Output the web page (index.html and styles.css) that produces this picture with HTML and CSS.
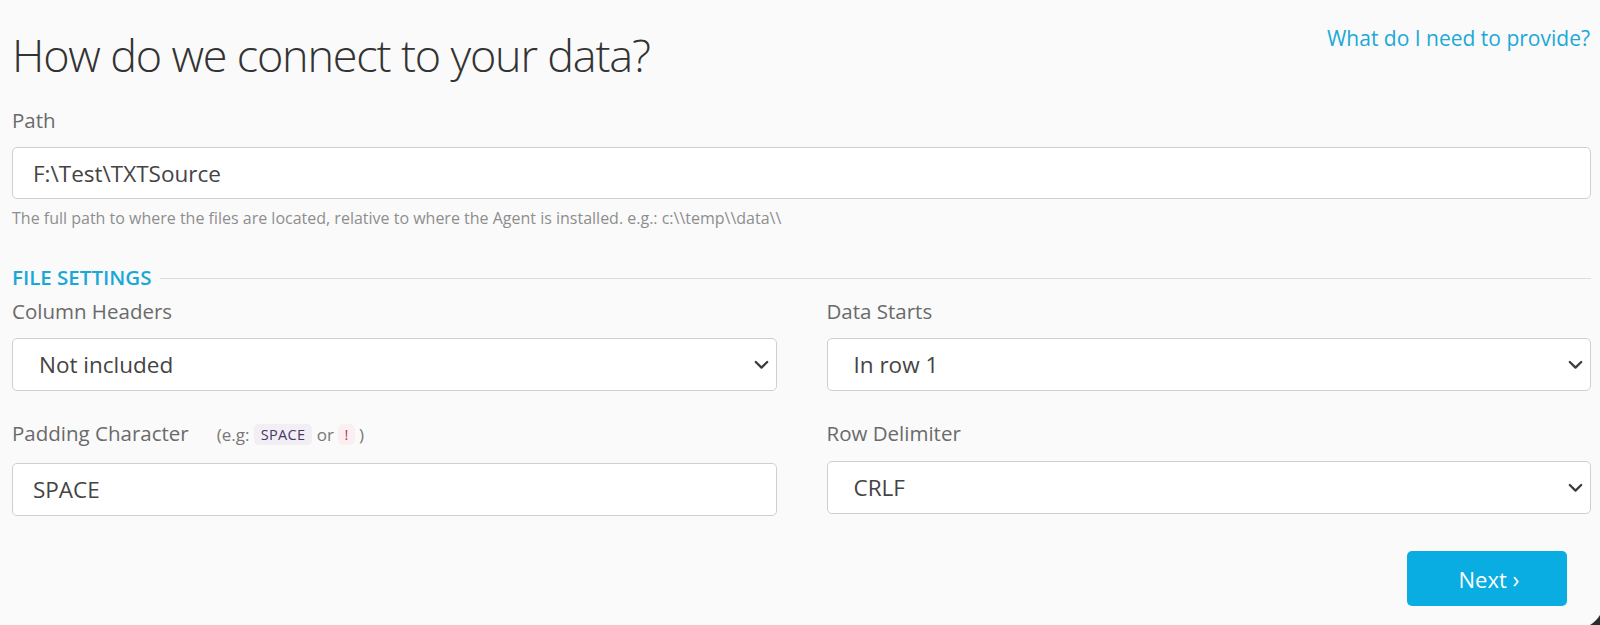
FILE: index.html
```html
<!DOCTYPE html>
<html lang="en">
<head>
<meta charset="utf-8">
<title>How do we connect to your data?</title>
<link rel="stylesheet" href="styles.css">
</head>
<body>
<main class="page">
  <header class="head">
    <h1 class="title">How do we connect to your data?</h1>
    <a class="help" href="#">What do I need to provide?</a>
  </header>

  <div class="field field-path">
    <div class="label">Path</div>
    <div class="control input">F:\Test\TXTSource</div>
    <p class="hint">The full path to where the files are located, relative to where the Agent is installed. e.g.: c:\\temp\\data\\</p>
  </div>

  <div class="section">
    <span class="section-title">FILE SETTINGS</span>
    <span class="section-rule"></span>
  </div>

  <div class="grid">
    <div class="field">
      <div class="label">Column Headers</div>
      <div class="control select">
        <span>Not included</span>
        <svg class="chev" width="15" height="10" viewBox="0 0 15 10"><path d="M1.8 2 L7.5 7.6 L13.2 2" fill="none" stroke="#3d3d3d" stroke-width="2.3" stroke-linecap="round" stroke-linejoin="round"/></svg>
      </div>
    </div>
    <div class="field">
      <div class="label">Data Starts</div>
      <div class="control select">
        <span>In row 1</span>
        <svg class="chev" width="15" height="10" viewBox="0 0 15 10"><path d="M1.8 2 L7.5 7.6 L13.2 2" fill="none" stroke="#3d3d3d" stroke-width="2.3" stroke-linecap="round" stroke-linejoin="round"/></svg>
      </div>
    </div>
    <div class="field row2">
      <div class="label">Padding Character<span class="eg">(e.g: <code class="code code-space">SPACE</code> or <code class="code code-bang">!</code> )</span></div>
      <div class="control input">SPACE</div>
    </div>
    <div class="field row2">
      <div class="label">Row Delimiter</div>
      <div class="control select">
        <span>CRLF</span>
        <svg class="chev" width="15" height="10" viewBox="0 0 15 10"><path d="M1.8 2 L7.5 7.6 L13.2 2" fill="none" stroke="#3d3d3d" stroke-width="2.3" stroke-linecap="round" stroke-linejoin="round"/></svg>
      </div>
    </div>
  </div>

  <div class="actions">
    <button class="next" type="button">Next <span class="arrow">&#8250;</span></button>
  </div>
</main>
<div class="corner"></div>
</body>
</html>
```

FILE: styles.css
```css
* { box-sizing: border-box; }

html, body {
  margin: 0;
  height: 100%;
}

body {
  background: #fafafa;
  font-family: "Open Sans", "Liberation Sans", sans-serif;
  color: #444;
  overflow: hidden;
  position: relative;
}

.page {
  padding: 0 9px 0 12px;
}

.head {
  display: flex;
  justify-content: space-between;
  align-items: flex-start;
  padding-top: 24px;
}

.title {
  margin: 3px 0 0;
  font-weight: 300;
  font-size: 45px;
  line-height: 56px;
  color: #333;
  letter-spacing: -1.2px;
}

.help {
  margin-right: 1px;
  font-size: 21px;
  line-height: 28px;
  color: #1ba9d6;
  text-decoration: none;
}

.field-path {
  margin-top: 23px;
}

.label {
  font-size: 20.5px;
  line-height: 28px;
  color: #6a6a6a;
}

.control {
  background: #fff;
  border: 1px solid #cfcfcf;
  border-radius: 5px;
  font-size: 22.5px;
  color: #444;
  display: flex;
  align-items: center;
}

.field-path .control {
  margin-top: 13px;
  height: 52px;
  padding: 0 20px;
}

.hint {
  margin: 8px 0 0;
  font-size: 16px;
  line-height: 22px;
  color: #8e8e8e;
}

.section {
  display: flex;
  align-items: center;
  margin-top: 34px;
  gap: 9px;
}

.section-title {
  font-size: 20.5px;
  font-weight: 600;
  line-height: 28px;
  color: #1aa8d8;
}

.section-rule {
  flex: 1;
  height: 1px;
  margin-top: 2px;
  background: #dcdcdc;
}

.grid {
  display: grid;
  grid-template-columns: 1fr 1fr;
  column-gap: 50px;
  margin-top: 6px;
}

.grid .label {
  margin-bottom: 13px;
}

.grid .control {
  height: 53px;
}

.select {
  justify-content: space-between;
  padding: 0 7px 0 26px;
}

.grid .input {
  padding: 0 20px;
}

.chev {
  display: block;
}

.row2 {
  margin-top: 28px;
}

.row2 .label {
  margin-bottom: 14px;
}

.eg {
  margin-left: 28px;
  font-size: 17px;
  color: #777;
}

.code {
  font-family: "Open Sans", "Liberation Sans", sans-serif;
  font-size: 14.5px;
  line-height: 21px;
  display: inline-block;
  vertical-align: 1px;
  border-radius: 5px;
  padding: 0 7px;
  letter-spacing: 0.3px;
}

.code-space {
  color: #44386a;
  background: #f3eef3;
}

.code-bang {
  color: #b03b5a;
  background: #fbeff1;
  padding: 0 6px;
}

.actions {
  display: flex;
  justify-content: flex-end;
  margin-top: 35px;
  padding-right: 24px;
}

.next {
  width: 160px;
  height: 55px;
  border: none;
  border-radius: 5px;
  background: #0aade1;
  color: #fff;
  font-family: "Open Sans", "Liberation Sans", sans-serif;
  font-size: 22px;
  padding: 0 0 0 4px;
}

.arrow {
  font-size: 23px;
}

.corner {
  position: absolute;
  right: 0;
  bottom: 0;
  width: 26px;
  height: 26px;
  background: radial-gradient(circle at 0 0, transparent 30px, #2b2b2b 31px);
}
```
